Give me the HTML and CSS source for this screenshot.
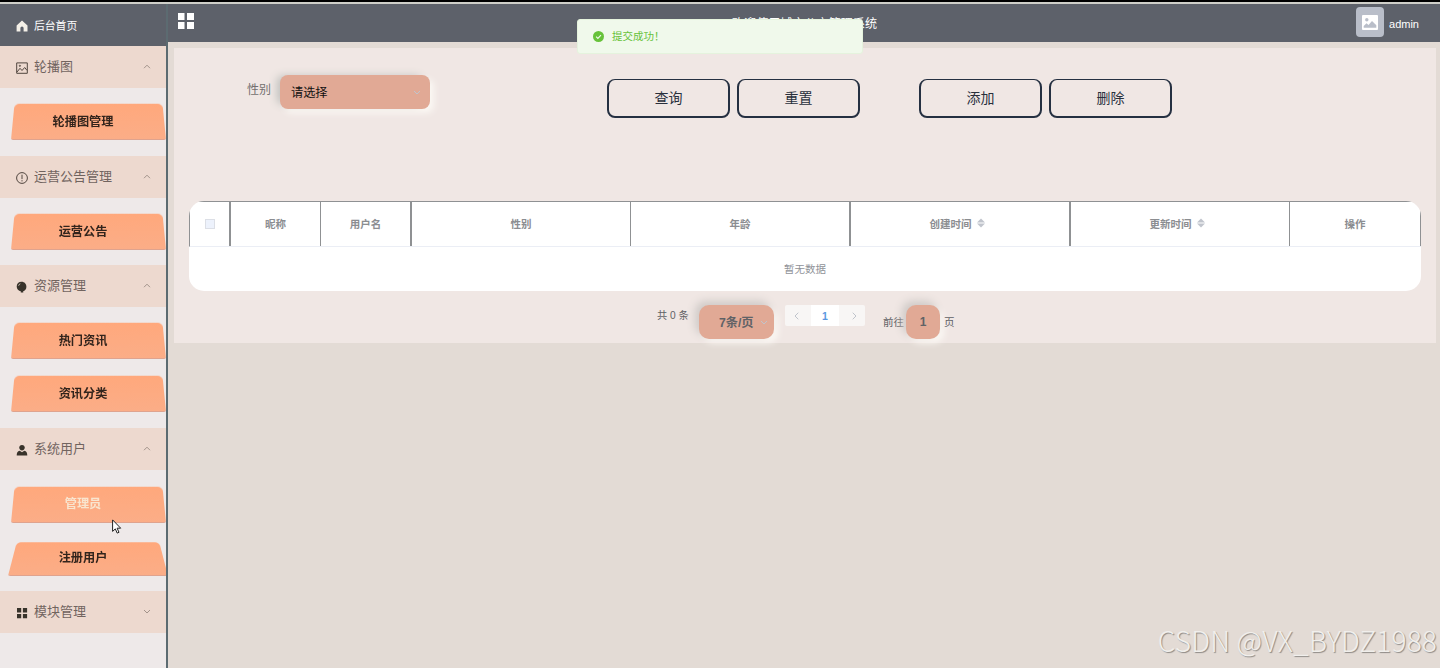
FILE: index.html
```
<!DOCTYPE html>
<html lang="zh-CN">
<head>
    <meta charset="UTF-8">
    <title>城市公交管理系统</title>
    <link rel="stylesheet" href="styles.css">
</head>
<body>
    <div class="layout">
        <!-- 左侧菜单 -->
        <div class="sidebar">
            <div class="home">
                <svg class="icon" viewBox="0 0 12 12"><path fill="#f4f0e8" d="M6 .6 11.5 5.5V11.5H7.6V8a1.6 1.6 0 0 0-3.2 0v3.5H.6v-6z"/></svg>
                <span>后台首页</span>
            </div>
            <div class="menu-title">
                <svg class="icon" viewBox="0 0 12 12" fill="none" stroke="#51463f"><path d="M.7.9h10.6v10.4H.7zM1 10l3-3.7 2 2.2 2.7-3L11 8.4"/><circle cx="3.9" cy="3.8" r=".6"/></svg>
                <span>轮播图</span>
                <svg class="arrow" viewBox="0 0 8 5"><path d="M1 4.2 4 1.2l3 3"/></svg>
            </div>
            <div class="submenu">
                <a class="item">轮播图管理</a>
            </div>
            <div class="menu-title">
                <svg class="icon" viewBox="0 0 12 12" fill="none" stroke="#51463f"><circle cx="6" cy="6" r="5.4"/><path d="M6 2.7v4.4M6 8.2v1.2"/></svg>
                <span>运营公告管理</span>
                <svg class="arrow" viewBox="0 0 8 5"><path d="M1 4.2 4 1.2l3 3"/></svg>
            </div>
            <div class="submenu">
                <a class="item">运营公告</a>
            </div>
            <div class="menu-title">
                <svg class="icon" viewBox="0 0 12 12"><path fill="#38332b" d="M5.5.8C8.5.8 10.4 3 10.4 5.7c0 2.4-1.5 4-3.400 4.700l.4 1.100H4.700l.3-1.100C2.500 9.800.7 8 .7 5.500.7 2.800 2.700.8 5.500.8z"/><path fill="none" stroke="#cdbfb0" d="M2.600 4.700c.2-1 .8-1.600 1.700-1.900"/></svg>
                <span>资源管理</span>
                <svg class="arrow" viewBox="0 0 8 5"><path d="M1 4.2 4 1.2l3 3"/></svg>
            </div>
            <div class="submenu">
                <a class="item">热门资讯</a>
                <a class="item">资讯分类</a>
            </div>
            <div class="menu-title">
                <svg class="icon" viewBox="0 0 12 12"><path fill="#38332b" d="M6 .9c1.700 0 2.800 1.200 2.800 2.700S7.700 6.500 6 6.500 3.200 5.100 3.200 3.600 4.300.9 6 .9zM.7 11.400c0-2.500.8-4 3-4.600L6 8.300l2.300-1.500c2.200.6 3 2.100 3 4.600z"/></svg>
                <span>系统用户</span>
                <svg class="arrow" viewBox="0 0 8 5"><path d="M1 4.2 4 1.2l3 3"/></svg>
            </div>
            <div class="submenu users">
                <a class="item active">管理员</a>
                <a class="item hover">注册用户</a>
            </div>
            <div class="menu-title">
                <svg class="icon" viewBox="0 0 12 12"><path fill="#38332b" d="M1 1h4.200v4.400H1zM6.900 1h4.200v4.400H6.900zM1 6.900h4.200v4.400H1zM6.900 6.900h4.200v4.400H6.900z"/></svg>
                <span>模块管理</span>
                <svg class="arrow" viewBox="0 0 8 5"><path d="M1 1l3 3 3-3"/></svg>
            </div>
        </div>

        <!-- 右侧内容 -->
        <div class="main">
            <div class="header">
                <svg class="fold" viewBox="0 0 16 16"><path fill="#fff" d="M0 0h6.500v7H0zM9 0h7v7H9zM0 9h6.500v7H0zM9 9h7v7H9z"/></svg>
                <div class="title">欢迎使用城市公交管理系统</div>
                <div class="user">
                    <div class="avatar">
                        <svg viewBox="0 0 16 15"><rect width="16" height="15" rx="1" fill="#fff"/><circle cx="4.8" cy="4.8" r="1.7" fill="#b9bec9"/><path fill="#b9bec9" d="M1.700 12.700V11L4.500 8.300l2 1.700L10 6l4.300 4.300v2.400z"/></svg>
                    </div>
                    <span>admin</span>
                </div>
            </div>

            <div class="panel">
                <div class="search">
                    <label>性别</label>
                    <div class="select">
                        <span>请选择</span>
                        <svg viewBox="0 0 8 5"><path d="M1 1l3 3 3-3"/></svg>
                    </div>
                    <div class="buttons">
                        <button>查询</button>
                        <button>重置</button>
                    </div>
                    <div class="buttons">
                        <button>添加</button>
                        <button>删除</button>
                    </div>
                </div>

                <div class="table">
                    <div class="thead">
                        <div class="th"><i class="checkbox"></i></div>
                        <div class="th">昵称</div>
                        <div class="th">用户名</div>
                        <div class="th">性别</div>
                        <div class="th">年龄</div>
                        <div class="th sort">创建时间<svg viewBox="0 0 8 10"><path d="M4 .5l4 4H0zM4 9.500L0 5.500h8z"/></svg></div>
                        <div class="th sort">更新时间<svg viewBox="0 0 8 10"><path d="M4 .5l4 4H0zM4 9.500L0 5.500h8z"/></svg></div>
                        <div class="th">操作</div>
                    </div>
                    <div class="empty">暂无数据</div>
                </div>

                <div class="pagination">
                    <span class="total">共 0 条</span>
                    <div class="size">7条/页<svg viewBox="0 0 8 5"><path d="M1 1l3 3 3-3"/></svg></div>
                    <div class="pager">
                        <span><svg viewBox="0 0 5 8"><path d="M4.300.7 1 4l3.300 3.300"/></svg></span>
                        <span class="current">1</span>
                        <span><svg viewBox="0 0 5 8"><path d="M.7.7 4 4 .7 7.300"/></svg></span>
                    </div>
                    <div class="jump">前往<b>1</b>页</div>
                </div>
            </div>
        </div>
    </div>

    <div class="message">
        <svg viewBox="0 0 12 12"><circle cx="6" cy="6" r="6" fill="#67c23a"/><path fill="none" stroke="#f0f9eb" stroke-width="1.300" d="M3.400 6.200l1.900 1.800 3.400-3.500"/></svg>
        <span>提交成功！</span>
    </div>
    <div class="watermark">CSDN @VX_BYDZ1988</div>
    <svg class="cursor" viewBox="0 0 10 15"><path fill="#fff" stroke="#222" d="M.6.9v11.500l2.700-2.500 1.900 4.200 1.800-.8-1.900-4.100h3.600z"/></svg>
</body>
</html>
```
FILE: styles.css
```
* {
    box-sizing: border-box;
}
body {
    margin: 0;
    height: 668px;
    overflow: hidden;
    position: relative;
    font-family: "Liberation Sans", "Noto Sans CJK SC", sans-serif;
    background: #e3dbd5;
    border-top: 2px solid #000;
}
.layout {
    display: flex;
    height: 666px;
    border-top: 2px solid #cfcfc9;
}
svg {
    flex: none;
}

/* 侧边栏 */
.sidebar {
    width: 168px;
    flex: none;
    background: #eee9e9;
    border-right: 2px solid #5c6b71;
    overflow: hidden;
}
.home {
    height: 42px;
    padding: 0 0 1px 16px;
    display: flex;
    align-items: center;
    color: #fff;
    font-size: 10.8px;
    background: #5d616a;
}
.icon {
    width: 12px;
    height: 12px;
    margin-right: 6px;
    position: relative;
    top: 1px;
}
.menu-title {
    height: 42px;
    padding: 0 15px 0 16px;
    display: flex;
    align-items: center;
    font-size: 13px;
    color: #71645f;
    background: #edd9cf;
}
.menu-title span {
    padding-bottom: 3px;
}
.arrow {
    width: 8px;
    height: 5px;
    margin: 0 0 1px auto;
    fill: none;
    stroke: #8e8178;
    stroke-width: .8;
}
.submenu {
    padding: 16px 0 15.700px 11px;
    display: flex;
    flex-direction: column;
    gap: 17px;
}
.submenu.users {
    padding: 17px 0 15px 11px;
    gap: 19px;
}
.item {
    position: relative;
    z-index: 0;
    width: 154px;
    height: 36px;
    padding-right: 10px;
    line-height: 36px;
    text-align: center;
    font-size: 12.200px;
    font-weight: bold;
    color: #32241c;
}
.item::before {
    content: "";
    position: absolute;
    z-index: -1;
    left: 0;
    right: -1px;
    bottom: 0;
    height: 37px;
    border-radius: 5px 5px 2px 2px;
    border-bottom: 1.500px solid #dfa38e;
    background: linear-gradient(#ffa87c, #fbad87);
    transform: perspective(70px) rotateX(5deg);
    transform-origin: bottom;
}
.item.active {
    line-height: 34px;
    color: #f9e5cf;
}
.item.hover {
    height: 34px;
    line-height: 33px;
}
.item.hover::before {
    left: -3px;
    right: -3px;
    transform: perspective(27px) rotateX(5deg);
}

/* 顶部 */
.main {
    flex: 1;
}
.header {
    height: 38px;
    padding: 0 21px 0 10px;
    display: flex;
    align-items: center;
    justify-content: space-between;
    color: #fff;
    background: #5d616a;
}
.fold {
    width: 16px;
    height: 16px;
    margin-bottom: 4px;
}
.title {
    font-size: 12.100px;
    margin-left: 59px;
    padding-bottom: 2px;
}
.user {
    display: flex;
    align-items: center;
    gap: 5px;
    font-size: 11px;
}
.user span {
    padding-top: 1px;
}
.avatar {
    width: 28px;
    height: 30px;
    margin-bottom: 2px;
    display: flex;
    align-items: center;
    justify-content: center;
    border-radius: 4px;
    background: #b9bec9;
}
.avatar svg {
    width: 16px;
    height: 15px;
}

/* 内容区 */
.panel {
    height: 295px;
    margin: 6px 4px 0 6px;
    padding: 27px 15px 0;
    background: #f0e7e4;
}
.search {
    height: 126px;
    padding-left: 58px;
    display: flex;
    align-items: flex-start;
}
.search label {
    width: 33px;
    line-height: 30px;
    font-size: 12px;
    color: #73706f;
}
.select {
    width: 150px;
    height: 34px;
    margin-right: 177px;
    padding: 0 9px 0 11px;
    display: flex;
    align-items: center;
    justify-content: space-between;
    font-size: 12.200px;
    color: #111;
    background: #e1a995;
    border-radius: 8px;
    box-shadow: -6px -2px 8px -3px #bfc0bd, 4px 4px 6px #fbf8f4;
}
.select span {
    padding-bottom: 1px;
}
.select svg, .size svg {
    width: 8px;
    height: 5px;
    fill: none;
    stroke: #c0c4cc;
}
.buttons {
    padding-top: 4px;
    margin-right: 59px;
    display: flex;
    gap: 7px;
}
button {
    width: 123px;
    height: 39px;
    padding: 0 0 3px;
    font-family: inherit;
    font-size: 14px;
    color: #29303c;
    background: transparent;
    border: 2px solid #253041;
    border-width: 1.500px 2px 2px;
    border-radius: 8px;
}

/* 表格 */
.table {
    width: 1232px;
    height: 90px;
    border-radius: 15px;
    background: #fff;
    overflow: hidden;
    font-size: 10.500px;
    color: #8b8d91;
}
.thead {
    height: 46px;
    display: grid;
    grid-template-columns: 41px 90px 91px 219px 220px 220px 219px 131px;
    border-top: 1px solid #8f9193;
    border-left: 1px solid #8f9193;
    border-bottom: 1px solid #ebeef5;
}
.th {
    display: flex;
    align-items: center;
    justify-content: center;
    padding-bottom: 1px;
    font-weight: bold;
    border-right: 1px solid #8f9193;
}
.th:nth-child(1), .th:nth-child(3), .th:nth-child(5), .th:nth-child(6) {
    border-right-width: 2px;
}
.checkbox {
    width: 10px;
    height: 10px;
    background: #edf2fc;
    border: 1px solid #dcdfe6;
}
.th.sort {
    padding: 0 6px 2px 0;
}
.sort svg {
    width: 8px;
    height: 10px;
    margin-left: 5px;
    fill: #c0c4cc;
}
.empty {
    line-height: 45px;
    text-align: center;
    color: #909399;
}

/* 分页 */
.pagination {
    padding: 14px 0 0 468px;
    display: flex;
    align-items: flex-start;
    font-size: 10.500px;
    color: #606266;
}
.total {
    width: 42px;
    line-height: 21px;
    font-size: 10.200px;
    white-space: nowrap;
}
.size {
    width: 75px;
    height: 34px;
    margin-right: 11px;
    padding: 0 6px 0 20px;
    display: flex;
    align-items: center;
    justify-content: space-between;
    font-size: 12.200px;
    font-weight: bold;
    background: #e1a995;
    border-radius: 10px;
    box-shadow: -4px -4px 8px #cfcac7, 4px 4px 6px #fbf8f4;
}
.pager {
    width: 80px;
    height: 21px;
    margin-right: 18px;
    display: flex;
    justify-content: space-between;
    background: #f8f6f5;
    border-radius: 2px;
}
.pager span {
    width: 22px;
    display: flex;
    align-items: center;
    justify-content: center;
}
.pager svg {
    width: 5px;
    height: 8px;
    fill: none;
    stroke: #c0c4cc;
}
.pager .current {
    width: 28px;
    font-weight: bold;
    color: #5a97df;
    background: #fff;
}
.jump {
    display: flex;
    line-height: 34px;
    white-space: nowrap;
}
.jump b {
    width: 34px;
    height: 34px;
    margin: 0 4px 0 2px;
    text-align: center;
    font-size: 12px;
    background: #e1a995;
    border-radius: 10px;
    box-shadow: -4px -4px 8px #cfcac7, 4px 4px 6px #fbf8f4;
}

/* 提示消息 */
.message {
    position: absolute;
    left: 577px;
    top: 17px;
    width: 286px;
    height: 35px;
    padding: 0 0 1px 15px;
    display: flex;
    align-items: center;
    gap: 8px;
    font-size: 10.500px;
    color: #67c23a;
    background: #f0f9eb;
    border: 1px solid #e5f3dd;
    border-radius: 3px;
}
.message svg {
    width: 11px;
    height: 11px;
}
.message span {
    padding-bottom: 1px;
}
.watermark {
    position: absolute;
    right: 3px;
    bottom: 11px;
    font-family: "Noto Sans CJK SC", sans-serif;
    font-size: 28px;
    font-weight: 300;
    line-height: 34px;
    letter-spacing: .2px;
    white-space: nowrap;
    color: #f1efec;
    text-shadow: 1px 1px 1px #8d8985;
}
.cursor {
    position: absolute;
    left: 112px;
    top: 517px;
    width: 10px;
    height: 15px;
}
```
